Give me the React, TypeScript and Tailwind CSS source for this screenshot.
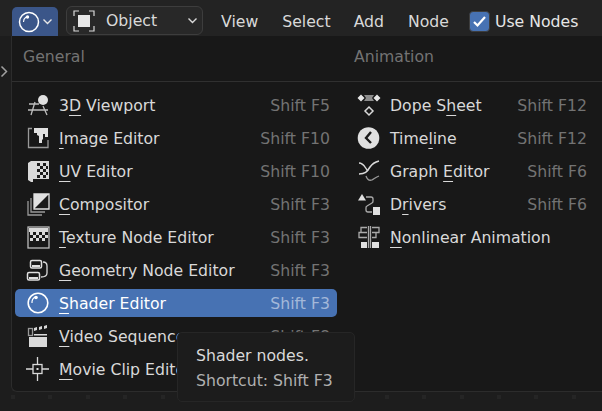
import type { ReactNode } from "react"

// icons are drawn on a 24x24 box, one unit is one pixel on screen
function Icon({ children }: { children: ReactNode }) {
    return (
        <svg width="24" height="24" viewBox="0 0 24 24" className="shrink-0" fill="none" stroke="#d9d9d9" strokeWidth="1.3">
            {children}
        </svg>
    )
}

const ShaderBall = () => (
    <Icon>
        <circle cx="12" cy="12" r="9.8" stroke="#fff" strokeWidth="1.6" />
        <path d="M6 12a6.500 6.500 0 0 1 3-6" stroke="#fff" strokeWidth="1.2" />
        <circle cx="10" cy="6.500" r="1.800" fill="#fff" stroke="none" />
    </Icon>
)

const icons: Record<string, ReactNode> = {
    viewport: (
        <Icon>
            <path d="M3 11h10M2 17h20M9 9L5 22M17 13l4 9" stroke="#bdbdbd" />
            <circle cx="17" cy="7" r="5" fill="#e0e0e0" stroke="none" />
        </Icon>
    ),
    image: (
        <Icon>
            <path d="M6 2.500H2.500v19H22V14" stroke="#999" />
            <path d="M8 2h14v9h-3V8h-2v5l-1 1v3h-3v-7l-2-1V7H8z" fill="#e0e0e0" stroke="none" />
        </Icon>
    ),
    uv: (
        <Icon>
            <path d="M5 2h18v18H7v3l-2 0-3-2V4z" fill="#d9d9d9" stroke="none" />
            <path d="M11 4h3v3h-3zM17 4h3v3h-3zM14 7h3v3h-3zM20 7h2v3h-2zM11 10h3v3h-3zM17 10h3v3h-3zM14 13h3v3h-3zM20 13h2v3h-2zM11 16h3v3h-3zM17 16h3v3h-3z" fill="#1a1a1a" stroke="none" />
        </Icon>
    ),
    compositor: (
        <Icon>
            <path d="M2 9v14h14M5 6v14h14" stroke="#999" />
            <path d="M8 2h15v15H8z" fill="#1a1a1a" stroke="#e0e0e0" />
            <path d="M8 2h15L8 17z" fill="#e0e0e0" stroke="none" />
        </Icon>
    ),
    texture: (
        <Icon>
            <rect x="2" y="2" width="21" height="21" stroke="#bbb" />
            <path d="M3 3h19v4H3z" fill="#d9d9d9" stroke="none" />
            <path d="M4 7h3v3H4zM10 7h3v3h-3zM16 7h3v3h-3zM7 10h3v3H7zM13 10h3v3h-3zM19 10h3v3h-3zM4 13h3v3H4zM10 13h3v3h-3zM16 13h3v3h-3z" fill="#d9d9d9" stroke="none" />
        </Icon>
    ),
    geometry: (
        <Icon>
            <rect x="4.500" y="2.500" width="11" height="7.500" rx="1.500" stroke="#e0e0e0" strokeWidth="1.500" />
            <path d="M6 8h8" stroke="#e0e0e0" strokeWidth="2" />
            <rect x="1.500" y="14.500" width="12" height="7.500" rx="1.500" stroke="#e0e0e0" strokeWidth="1.500" />
            <path d="M3 20h9" stroke="#e0e0e0" strokeWidth="2" />
            <path d="M17 4c3 0 4 1 4 4v7c0 3-2 4-6 4" />
        </Icon>
    ),
    video: (
        <Icon>
            <rect x="2.500" y="4.500" width="4" height="7" stroke="#999" />
            <path d="M8 4l3-1v3L8 7zM13 3l3-1v3l-3 1zM18 2l3-1v3l-3 1z" fill="#d9d9d9" stroke="none" />
            <path d="M8 10h13v1.500H8zM3 13h18v10H3z" fill="#d9d9d9" stroke="none" />
        </Icon>
    ),
    clip: (
        <Icon>
            <rect x="7" y="7.500" width="9" height="9" />
            <path d="M11.500 0v7M11.500 17v7M0 12h7M16 12h7" />
            <rect x="10.500" y="11" width="2" height="2" fill="#d9d9d9" stroke="none" />
        </Icon>
    ),
    dope: (
        <Icon>
            <path d="M0.500 5l3.500-3.500L7.500 5 4 8.500zM16.500 5L20 1.500 23.500 5 20 8.500z" fill="#e6e6e6" stroke="none" />
            <path d="M7 2h10l-2 3 2 3H7l2-3z" fill="#8c8c8c" stroke="none" />
            <path d="M12 14l4 4-4 4-4-4z" stroke="#d9d9d9" strokeWidth="1.500" />
        </Icon>
    ),
    timeline: (
        <Icon>
            <circle cx="11.500" cy="12" r="10.800" fill="#e0e0e0" stroke="none" />
            <path d="M14 6l-5 6 5 5" stroke="#1a1a1a" strokeWidth="2.400" />
        </Icon>
    ),
    graph: (
        <Icon>
            <path d="M2 4c5 0 6 5 9 8" />
            <path d="M2 15c6 0 8-2 11-7 2-3 5-5 9-6" strokeWidth="1.500" />
            <path d="M9 17c1 3 3 5 6 4 2-1 4-3 7-4" stroke="#999" />
        </Icon>
    ),
    drivers: (
        <Icon>
            <path d="M1 8.500l4-6.500 4 6.500z" fill="#e0e0e0" stroke="none" />
            <path d="M9 5h5a2 2 0 0 1 2 2v2a2 2 0 0 1-1 2l-5 3a2 2 0 0 0-1 2v2a2 2 0 0 0 2 2h4" stroke="#aaa" />
            <rect x="16" y="15" width="7" height="8" fill="#e0e0e0" stroke="none" />
        </Icon>
    ),
    nla: (
        <Icon>
            <path d="M11.500 1v22M13.500 1v22" stroke="#aaa" />
            <path d="M10 2.500H4v5h6M4 7.500H2v5h8M15 2.500h7v5h-7M15 12.500h4v-5" stroke="#aaa" />
            <path d="M4 17h6v6H4zM15 17h7v6h-7z" fill="#e0e0e0" stroke="none" />
        </Icon>
    ),
}

type Row = { icon: string; before: string; key_: string; after: string; shortcut: string }

const general: Row[] = [
    { icon: "viewport", before: "3", key_: "D", after: " Viewport", shortcut: "Shift F5" },
    { icon: "image", before: "", key_: "I", after: "mage Editor", shortcut: "Shift F10" },
    { icon: "uv", before: "", key_: "U", after: "V Editor", shortcut: "Shift F10" },
    { icon: "compositor", before: "", key_: "C", after: "ompositor", shortcut: "Shift F3" },
    { icon: "texture", before: "", key_: "T", after: "exture Node Editor", shortcut: "Shift F3" },
    { icon: "geometry", before: "", key_: "G", after: "eometry Node Editor", shortcut: "Shift F3" },
    { icon: "shader", before: "", key_: "S", after: "hader Editor", shortcut: "Shift F3" },
    { icon: "video", before: "", key_: "V", after: "ideo Sequencer", shortcut: "Shift F8" },
    { icon: "clip", before: "", key_: "M", after: "ovie Clip Editor", shortcut: "Shift F2" },
]

const animation: Row[] = [
    { icon: "dope", before: "Dope S", key_: "h", after: "eet", shortcut: "Shift F12" },
    { icon: "timeline", before: "Time", key_: "l", after: "ine", shortcut: "Shift F12" },
    { icon: "graph", before: "Graph ", key_: "E", after: "ditor", shortcut: "Shift F6" },
    { icon: "drivers", before: "D", key_: "r", after: "ivers", shortcut: "Shift F6" },
    { icon: "nla", before: "", key_: "N", after: "onlinear Animation", shortcut: "" },
]

function MenuRow({ row, active }: { row: Row; active?: boolean }) {
    return (
        <div className={`flex h-[28px] items-center rounded-[5px] pl-[11px] pr-[7px] ${active ? "bg-[#4772b3] text-white" : "text-[#d9d9d9]"}`}>
            {row.icon === "shader" ? <ShaderBall /> : icons[row.icon]}
            <span className="ml-[9px] flex-1 whitespace-pre pt-[1px]">
                {row.before}
                <span className="underline decoration-1 underline-offset-[4px]">{row.key_}</span>
                {row.after}
            </span>
            <span className={`pt-[1px] ${active ? "text-[#a3b8d9]" : "text-[#737373]"}`}>{row.shortcut}</span>
        </div>
    )
}

function Checkbox() {
    return (
        <span className="flex size-[21px] items-center justify-center rounded-[4px] border border-[#3d3d3d] bg-[#4772b3]">
            <svg width="15" height="15" viewBox="0 0 15 15" fill="none" stroke="#fff" strokeWidth="2.200">
                <path d="M2 8l3.500 3.500L13 3" />
            </svg>
        </span>
    )
}

export default function App() {
    return (
        <div className="relative flex h-[411px] w-[602px] flex-col overflow-hidden bg-[#1d1d1d] font-['DejaVu_Sans',sans-serif] text-[15.7px] leading-none text-[#d9d9d9]">
            {/* Top bar */}
            <div className="flex h-[36px] shrink-0 items-end bg-[#232323] pl-[12px]">
                <div className="flex h-[29px] w-[46px] items-center gap-[2px] rounded-t-[5px] bg-[#3b5689] pl-[6px]">
                    <svg width="22" height="22" viewBox="0 0 22 22" fill="none" stroke="#fff" strokeWidth="1.500">
                        <circle cx="11" cy="11" r="9.500" />
                        <path d="M5.500 11a6 6 0 0 1 2.500-5" strokeWidth="1.100" />
                        <circle cx="9.500" cy="6" r="1.700" fill="#fff" stroke="none" />
                    </svg>
                    <svg width="11" height="11" viewBox="0 0 11 11" fill="none" stroke="#e6e6e6" strokeWidth="1.400">
                        <path d="M1.500 3.500L5.500 7.500L9.500 3.500" />
                    </svg>
                </div>
                <div className="mb-[1px] ml-[8px] flex h-[29px] w-[137px] items-center rounded-[6px] border border-[#3d3d3d] bg-[#282828] pl-[6px] pr-[4px]">
                    <svg width="22" height="22" viewBox="0 0 22 22" fill="none" stroke="#d9d9d9" strokeWidth="1.200">
                        <path d="M1 6V1h5M16 1h5v5M21 16v5h-5M6 21H1v-5" />
                        <rect x="5" y="5" width="12" height="12" fill="#e6e6e6" stroke="none" />
                    </svg>
                    <span className="ml-[11px] flex-1 pt-[1px]">Object</span>
                    <svg width="11" height="11" viewBox="0 0 11 11" fill="none" stroke="#d9d9d9" strokeWidth="1.400">
                        <path d="M1.500 3.500L5.500 7.500L9.500 3.500" />
                    </svg>
                </div>
                <div className="flex h-[30px] flex-1 items-center pt-[1px]">
                    <span className="ml-[18px]">View</span>
                    <span className="ml-[24px]">Select</span>
                    <span className="ml-[23px]">Add</span>
                    <span className="ml-[24px]">Node</span>
                    <span className="ml-[20px] flex items-center gap-[5px] text-[#e6e6e6]">
                        <Checkbox />
                        Use Nodes
                    </span>
                </div>
            </div>

            {/* Editor menu */}
            <div className="ml-[11px] flex h-[356px] shrink-0 flex-col rounded-bl-[6px] border-b border-l border-[#2c2c2c] bg-[#181818]">
                <div className="flex h-[46px] shrink-0 items-start border-b border-[#303030] pt-[13px] text-[#737373]">
                    <span className="ml-[11px] w-[331px]">General</span>
                    <span>Animation</span>
                </div>
                <div className="flex pl-[3px] pt-[9px]">
                    <div className="flex w-[322px] flex-col gap-[5px]">
                        {general.map((row) => (
                            <MenuRow key={row.key_} row={row} active={row.icon === "shader"} />
                        ))}
                    </div>
                    <div className="ml-[9px] flex w-[248px] flex-col gap-[5px]">
                        {animation.map((row) => (
                            <MenuRow key={row.key_} row={row} />
                        ))}
                    </div>
                </div>
            </div>

            {/* Timeline ticks */}
            <div className="flex gap-[33.400px] pl-[11px] pt-[3px]">
                {Array.from({ length: 16 }).map((_, i) => (
                    <span key={i} className="size-[4px] shrink-0 bg-[#252525]" />
                ))}
            </div>

            {/* Region toggle */}
            <svg className="absolute left-0 top-[65px]" width="9" height="13" viewBox="0 0 9 13" fill="none" stroke="#a0a0a0" strokeWidth="1.500">
                <path d="M1.500 1.500L6.500 6.500L1.500 11.500" />
            </svg>

            {/* Tooltip */}
            <div className="absolute left-[177px] top-[332px] flex h-[70px] w-[178px] flex-col gap-[9px] rounded-[5px] border border-[#262626] bg-[#1c1c1c] pl-[18px] pt-[15px]">
                <span className="text-[#d9d9d9]">Shader nodes.</span>
                <span className="text-[#b0b0b0]">Shortcut: Shift F3</span>
            </div>
        </div>
    )
}
